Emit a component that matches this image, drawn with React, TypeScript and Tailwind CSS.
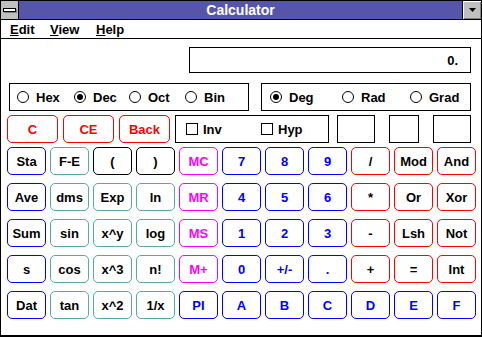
import React from 'react';

type Key = { label: string; text: string; border: string };

const BLUE = 'text-[#0000ff]';
const BLACK = 'text-black';
const MAG = 'text-[#ff00ff]';

const bBlue = 'border-[#0000ff]';
const bTeal = 'border-[#55aaaa]';
const bBlack = 'border-black';
const bRed = 'border-[#ff0000]';
const bMag = 'border-[#ff00ff]';

const rows: Key[][] = [
	[
		{ label: 'Sta', text: BLACK, border: bBlue },
		{ label: 'F-E', text: BLACK, border: bTeal },
		{ label: '(', text: BLACK, border: bBlack },
		{ label: ')', text: BLACK, border: bBlack },
		{ label: 'MC', text: MAG, border: bMag },
		{ label: '7', text: BLUE, border: bBlue },
		{ label: '8', text: BLUE, border: bBlue },
		{ label: '9', text: BLUE, border: bBlue },
		{ label: '/', text: BLACK, border: bRed },
		{ label: 'Mod', text: BLACK, border: bRed },
		{ label: 'And', text: BLACK, border: bRed },
	],
	[
		{ label: 'Ave', text: BLACK, border: bBlue },
		{ label: 'dms', text: BLACK, border: bTeal },
		{ label: 'Exp', text: BLACK, border: bTeal },
		{ label: 'ln', text: BLACK, border: bTeal },
		{ label: 'MR', text: MAG, border: bMag },
		{ label: '4', text: BLUE, border: bBlue },
		{ label: '5', text: BLUE, border: bBlue },
		{ label: '6', text: BLUE, border: bBlue },
		{ label: '*', text: BLACK, border: bRed },
		{ label: 'Or', text: BLACK, border: bRed },
		{ label: 'Xor', text: BLACK, border: bRed },
	],
	[
		{ label: 'Sum', text: BLACK, border: bBlue },
		{ label: 'sin', text: BLACK, border: bTeal },
		{ label: 'x^y', text: BLACK, border: bTeal },
		{ label: 'log', text: BLACK, border: bTeal },
		{ label: 'MS', text: MAG, border: bMag },
		{ label: '1', text: BLUE, border: bBlue },
		{ label: '2', text: BLUE, border: bBlue },
		{ label: '3', text: BLUE, border: bBlue },
		{ label: '-', text: BLACK, border: bRed },
		{ label: 'Lsh', text: BLACK, border: bRed },
		{ label: 'Not', text: BLACK, border: bRed },
	],
	[
		{ label: 's', text: BLACK, border: bBlue },
		{ label: 'cos', text: BLACK, border: bTeal },
		{ label: 'x^3', text: BLACK, border: bTeal },
		{ label: 'n!', text: BLACK, border: bTeal },
		{ label: 'M+', text: MAG, border: bMag },
		{ label: '0', text: BLUE, border: bBlue },
		{ label: '+/-', text: BLUE, border: bBlue },
		{ label: '.', text: BLUE, border: bBlue },
		{ label: '+', text: BLACK, border: bRed },
		{ label: '=', text: BLACK, border: bRed },
		{ label: 'Int', text: BLACK, border: bRed },
	],
	[
		{ label: 'Dat', text: BLACK, border: bBlue },
		{ label: 'tan', text: BLACK, border: bTeal },
		{ label: 'x^2', text: BLACK, border: bTeal },
		{ label: '1/x', text: BLACK, border: bTeal },
		{ label: 'PI', text: BLUE, border: bBlue },
		{ label: 'A', text: BLUE, border: bBlue },
		{ label: 'B', text: BLUE, border: bBlue },
		{ label: 'C', text: BLUE, border: bBlue },
		{ label: 'D', text: BLUE, border: bBlue },
		{ label: 'E', text: BLUE, border: bBlue },
		{ label: 'F', text: BLUE, border: bBlue },
	],
];

function Radio({ label, on }: { label: string; on?: boolean }) {
	return (
		<div className="flex items-center gap-[7px]">
			<span className="w-[12px] h-[12px] rounded-full border border-black flex items-center justify-center">
				{on && <span className="w-[6px] h-[6px] rounded-full bg-black" />}
			</span>
			<span>{label}</span>
		</div>
	);
}

function Check({ label }: { label: string }) {
	return (
		<div className="flex items-center gap-[5px]">
			<span className="w-[12px] h-[12px] border border-black" />
			<span>{label}</span>
		</div>
	);
}

function App() {
	return (
		<div className="w-[482px] h-[337px] bg-white border-t border-l border-r border-b-2 border-black overflow-hidden font-['Liberation_Sans',Arial,sans-serif] font-bold text-[13px] leading-none text-black select-none">
			{/* title bar */}
			<div className="flex h-[19px] border-b border-black">
				<div className="w-[18px] bg-[#c0c0c0] border-r border-black flex items-center justify-center">
					<span className="w-[13px] h-[4px] bg-white border border-black shadow-[1px_1px_0_#808080]" />
				</div>
				<div className="flex-1 bg-[#5555aa] text-white text-[14px] flex items-center justify-center">Calculator</div>
				<div className="w-[19px] bg-[#c0c0c0] border-l border-black flex items-center justify-center shadow-[inset_1px_1px_0_#fff,inset_-1px_-1px_0_#808080]">
					<svg width="7" height="4" viewBox="0 0 7 4">
						<path d="M0 0h7L3.5 4z" fill="#000" />
					</svg>
				</div>
			</div>

			{/* menu bar */}
			<div className="flex items-center h-[19px] border-b border-black pl-[9px]">
				<div className="w-[40px]"><span className="underline underline-offset-1">E</span>dit</div>
				<div className="w-[46px]"><span className="underline underline-offset-1">V</span>iew</div>
				<div><span className="underline underline-offset-1">H</span>elp</div>
			</div>

			{/* display */}
			<div className="flex justify-end mt-[8px] mr-[10px]">
				<div className="w-[282px] h-[26px] border border-black flex items-center justify-end pr-[12px]">0.</div>
			</div>

			{/* radio groups */}
			<div className="flex mt-[10px] pl-[8px] gap-[12px]">
				<div className="w-[240px] h-[28px] border border-black flex items-center pl-[7px]">
					<div className="w-[57px]"><Radio label="Hex" /></div>
					<div className="w-[55px]"><Radio label="Dec" on /></div>
					<div className="w-[56px]"><Radio label="Oct" /></div>
					<Radio label="Bin" />
				</div>
				<div className="w-[210px] h-[28px] border border-black flex items-center pl-[8px]">
					<div className="w-[72px]"><Radio label="Deg" on /></div>
					<div className="w-[68px]"><Radio label="Rad" /></div>
					<Radio label="Grad" />
				</div>
			</div>

			{/* C / CE / Back row */}
			<div className="flex mt-[4px] pl-[6px]">
				{['C', 'CE', 'Back'].map((t) => (
					<div
						key={t}
						className="w-[51px] h-[28px] mr-[5px] rounded-[5px] border border-[#ff0000] text-[#ff0000] flex items-center justify-center"
					>
						{t}
					</div>
				))}
				<div className="w-[154px] h-[28px] border border-black flex items-center pl-[10px]">
					<div className="w-[75px]"><Check label="Inv" /></div>
					<Check label="Hyp" />
				</div>
				<div className="w-[38px] h-[28px] border border-black ml-[8px]" />
				<div className="w-[30px] h-[28px] border border-black ml-[14px]" />
				<div className="w-[38px] h-[28px] border border-black ml-[14px]" />
			</div>

			{/* keypad */}
			<div className="grid grid-cols-[repeat(11,39px)] gap-x-[4px] gap-y-[8px] mt-[4px] pl-[6px]">
				{rows.flat().map((k, i) => (
					<div
						key={i}
						className={`h-[28px] rounded-[5px] border flex items-center justify-center ${k.border} ${k.text}`}
					>
						{k.label}
					</div>
				))}
			</div>
		</div>
	);
}

export default App;
